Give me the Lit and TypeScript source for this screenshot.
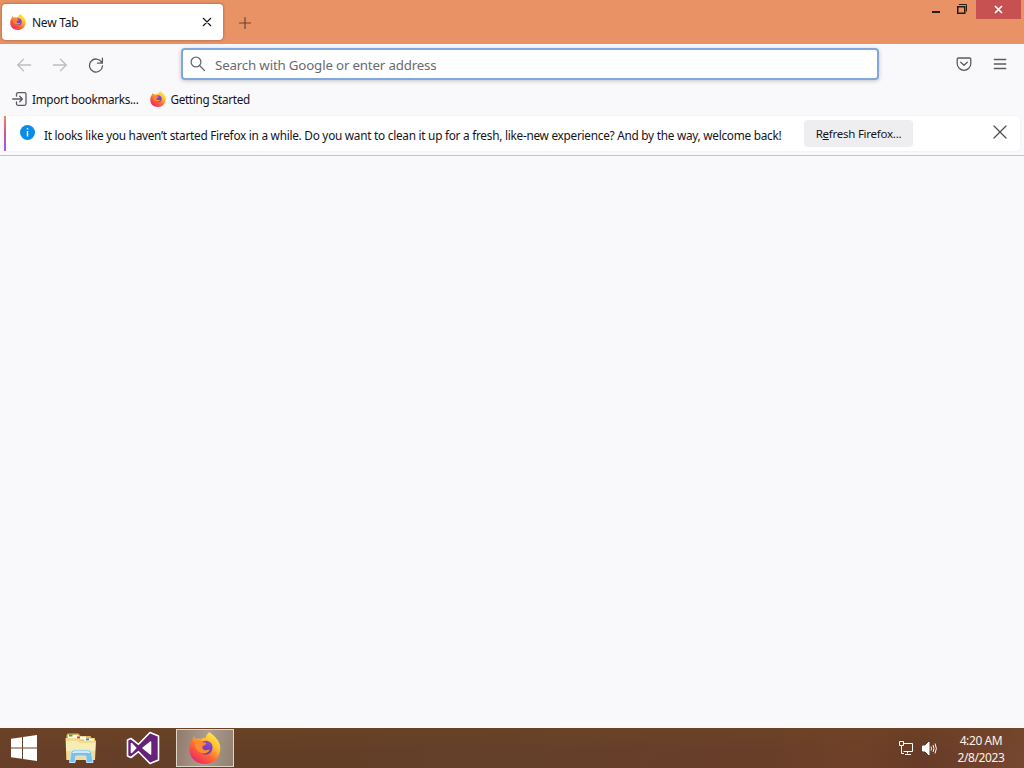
import { LitElement, html, css, svg } from 'lit'
import { customElement, property } from 'lit/decorators.js'

@customElement('firefox-logo')
export class FirefoxLogo extends LitElement {
  @property({ type: Number }) size = 16

  static styles = css`
    :host {
      display: flex;
      flex: none;
    }
  `

  render() {
    return html`
      <svg width=${this.size} height=${this.size} viewBox="0 0 32 32">
        <defs>
          <linearGradient id="flame" x1="0.85" y1="0.05" x2="0.2" y2="0.95">
            <stop offset="0" stop-color="#fff04a" />
            <stop offset="0.32" stop-color="#ffbe2e" />
            <stop offset="0.62" stop-color="#ff6a35" />
            <stop offset="1" stop-color="#ee2465" />
          </linearGradient>
          <linearGradient id="globe" x1="0.6" y1="0" x2="0.4" y2="1">
            <stop offset="0" stop-color="#9a45cf" />
            <stop offset="1" stop-color="#5540b8" />
          </linearGradient>
        </defs>
        <path
          fill="url(#flame)"
          d="M20.500 0c2 2.200 4.800 3.700 6.800 6.500 3 3.200 4.200 6.500 4 10.500C31 26 24.500 32 16 32 7.500 32 1 26.500.5 18.500.2 14 1.300 10 3.800 7.300L4.600 4l2.600 3c1.500-.6 3.200-.6 4.600.1 1.600-1.200 3.200-1.600 5-1.400C17 3.800 18.300 1.500 20.500 0z"
        />
        <path
          fill="url(#globe)"
          d="M12.500 10.500c1.500-1.500 4-2.300 6.300-1.500 3.600 1.200 5.200 4.200 4.700 7.500-.6 4-4 6.500-7.800 6-3.700-.5-6.200-3.700-5.700-7.200.3-2 1-3.500 2.500-4.800z"
        />
        <path
          fill="#ff8a2f"
          d="M5.500 9.500c3-2 6.500-1.300 8.500 1 1.800 0 3 .5 3.400 1.300-1 1.400-3 1.700-4 2.700-.4 1.800.6 3.200 2.600 3.700 2 .3 3.500-.9 5-.4-1.500 3-5 4.400-8 3.400C8.500 20 5.500 15 5.500 9.500z"
        />
      </svg>
    `
  }
}

// 16px toolbar glyphs, drawn with the current text colour
const icons = {
  back: svg`<path d="M14.700 8H1.500M7.500 2.300 1.800 8l5.700 5.700" />`,
  forward: svg`<path d="M1.300 8h13.200M8.500 2.300 14.200 8l-5.700 5.700" />`,
  reload: svg`<path d="M13.600 5.200A6.500 6.500 0 1 0 14.500 9M14.400 1.200v5H9.500" />`,
  search: svg`<circle cx="6" cy="6" r="4.900" /><path d="m9.700 9.700 4.800 4.800" />`,
  pocket: svg`<path d="M2.500 2h11c.8 0 1.300.5 1.300 1.300V7.500a6.800 6.800 0 0 1-13.600 0V3.300C1.200 2.500 1.700 2 2.500 2zM4.700 6.200 8 9.300l3.300-3.100" />`,
  menu: svg`<path d="M2.300 3.500h11.500M2.300 8h11.500M2.300 12.500h11.500" />`,
  import: svg`<path d="M4.500 5V3.200c0-.9.600-1.500 1.500-1.500h6.500c.9 0 1.500.6 1.500 1.500v9.600c0 .9-.6 1.500-1.500 1.500H6c-.9 0-1.500-.6-1.500-1.500V11M.7 8h9.500M7.700 5.300 10.400 8l-2.700 2.700" />`,
  close: svg`<path d="m2 2 12 12M14 2 2 14" />`,
  plus: svg`<path d="M8 2.500v11M2.500 8h11" />`,
}

@customElement('line-icon')
export class LineIcon extends LitElement {
  @property({ type: String }) name: keyof typeof icons = 'close'
  @property({ type: Number }) size = 16
  @property({ type: Number }) weight = 1.3

  static styles = css`
    :host {
      display: flex;
      flex: none;
    }
  `

  render() {
    return html`
      <svg
        width=${this.size}
        height=${this.size}
        viewBox="0 0 16 16"
        fill="none"
        stroke="currentColor"
        stroke-width=${this.weight}
        stroke-linecap="round"
        stroke-linejoin="round"
      >
        ${icons[this.name]}
      </svg>
    `
  }
}

@customElement('browser-window')
export class BrowserWindow extends LitElement {
  static styles = css`
    :host {
      display: flex;
      flex-direction: column;
      flex: 1;
      min-height: 0;
      background: #f9f9fb;
      color: #15141a;
      font-size: 12px;
    }
    .tabs {
      display: flex;
      height: 44px;
      background: #e89266;
    }
    .tab {
      display: flex;
      align-items: center;
      box-sizing: border-box;
      width: 221px;
      height: 36px;
      margin: 4px 0 0 2px;
      padding: 0 11px 0 8px;
      border-radius: 4px;
      background: #fff;
      box-shadow: 0 0 3px rgba(80, 40, 20, 0.5);
    }
    .tab-title {
      flex: 1;
      margin: 1px 0 0 6px;
      letter-spacing: -0.25px;
    }
    .new-tab {
      margin: 15px 0 0 14px;
      color: #6b4433;
    }
    .controls {
      display: flex;
      margin-left: auto;
      height: 19px;
    }
    .controls svg {
      display: block;
    }
    .close {
      width: 45px;
      margin: 0 3px 0 0;
      background: #c75050;
    }
    .nav {
      display: flex;
      align-items: center;
      height: 40px;
      box-sizing: border-box;
      padding: 0 16px;
      color: #5b5b62;
    }
    .history {
      display: flex;
      gap: 20px;
      flex: 1;
      padding-top: 1px;
    }
    .disabled {
      color: #bdbdc2;
    }
    .url {
      display: flex;
      align-items: center;
      box-sizing: border-box;
      width: 698px;
      height: 32px;
      padding-left: 7px;
      border: 2px solid #7fa8dc;
      border-radius: 4px;
      background: #fff;
      box-shadow: 0 1px 4px rgba(0, 0, 0, 0.22);
      font-size: 13.3px;
      color: #6a6a70;
    }
    .url span {
      margin: 2px 0 0 9px;
      letter-spacing: -0.17px;
    }
    .actions {
      display: flex;
      justify-content: flex-end;
      gap: 20px;
      width: 129px;
    }
    .bookmarks {
      display: flex;
      align-items: center;
      height: 29px;
      padding-left: 12px;
    }
    .bookmark {
      display: flex;
      align-items: center;
      gap: 4px;
      font-size: 11.7px;
      letter-spacing: -0.31px;
    }
    .bookmark line-icon {
      color: #5b5b62;
    }
    .bookmark + .bookmark {
      margin-left: 12px;
    }
    .notice {
      display: flex;
      align-items: center;
      height: 35px;
      margin: 3px 4px 4px;
      border-radius: 4px;
      background: #fff;
      box-shadow: 0 0 2px rgba(0, 0, 0, 0.08);
    }
    .stripe {
      width: 2px;
      height: 35px;
      background: linear-gradient(#f08a5c, #d0529a 50%, #a05cf0);
    }
    .info {
      margin: 0 9px 3px 14px;
    }
    .message {
      width: 760px;
      padding-top: 2px;
      font-size: 11.8px;
      letter-spacing: -0.26px;
      white-space: nowrap;
    }
    .refresh {
      width: 109px;
      height: 27px;
      border: 0;
      padding: 0;
      border-radius: 4px;
      background: #eeeef1;
      color: inherit;
      font: inherit;
      font-size: 11.5px;
      letter-spacing: -0.25px;
    }
    .dismiss {
      margin: 0 12px 3px auto;
      color: #4a4a50;
    }
    .page {
      flex: 1;
      border-top: 1px solid #c5c5c9;
    }
  `

  render() {
    return html`
      <div class="tabs">
        <div class="tab">
          <firefox-logo></firefox-logo>
          <span class="tab-title">New Tab</span>
          <line-icon name="close" size="10" weight="1.8"></line-icon>
        </div>
        <line-icon class="new-tab" name="plus" weight="1.2"></line-icon>
        <div class="controls">
          <svg width="48" height="19">
            <rect x="4" y="11" width="8" height="2" fill="#2b1a12" />
            <path d="M29.750 6.750h7v6.500h-7z" fill="none" stroke="#2b1a12" stroke-width="1.500" />
            <path d="M31 4.500h7.500v7" fill="none" stroke="#2b1a12" />
          </svg>
          <svg class="close" width="45" height="19">
            <path d="m19 6 7 7M26 6l-7 7" stroke="#fff" stroke-width="1.700" />
          </svg>
        </div>
      </div>
      <div class="nav">
        <div class="history">
          <line-icon class="disabled" name="back"></line-icon>
          <line-icon class="disabled" name="forward"></line-icon>
          <line-icon name="reload"></line-icon>
        </div>
        <div class="url">
          <line-icon name="search"></line-icon>
          <span>Search with Google or enter address</span>
        </div>
        <div class="actions">
          <line-icon name="pocket"></line-icon>
          <line-icon name="menu"></line-icon>
        </div>
      </div>
      <div class="bookmarks">
        <div class="bookmark"><line-icon name="import"></line-icon>Import bookmarks...</div>
        <div class="bookmark"><firefox-logo></firefox-logo>Getting Started</div>
      </div>
      <div class="notice">
        <div class="stripe"></div>
        <svg class="info" width="15" height="15" viewBox="0 0 15 15">
          <circle cx="7.500" cy="7.500" r="7.500" fill="#0c8ce9" />
          <path d="M7.500 3v1.500M7.500 6v5.500" stroke="#fff" stroke-width="1.400" />
        </svg>
        <span class="message"
          >It looks like you haven’t started Firefox in a while. Do you want to clean it up for a fresh, like-new
          experience? And by the way, welcome back!</span
        >
        <button class="refresh">R<u>e</u>fresh Firefox...</button>
        <line-icon class="dismiss" name="close" weight="1.2"></line-icon>
      </div>
      <div class="page"></div>
    `
  }
}

@customElement('task-bar')
export class TaskBar extends LitElement {
  static styles = css`
    :host {
      display: flex;
      align-items: center;
      height: 40px;
      background: linear-gradient(rgba(112, 72, 32, 0.4), rgba(104, 60, 40, 0) 60%),
        linear-gradient(90deg, #683f29, #633e26 25%, #643f2a 50%, #693e29 75%, #6e4028 84%, #673b27 90%, #764630);
      color: #fbf2ec;
      font-size: 12px;
    }
    svg {
      display: block;
      flex: none;
    }
    .start {
      margin-left: 11px;
    }
    .files {
      margin-left: 27px;
    }
    .studio {
      margin-left: 28px;
    }
    .active {
      display: flex;
      align-items: center;
      justify-content: center;
      box-sizing: border-box;
      width: 58px;
      height: 38px;
      margin-left: 16px;
      border: 1px solid #e0d4c4;
      background: linear-gradient(100deg, #90796a, #aa9d91 50%, #92806f);
    }
    .tray {
      display: flex;
      align-items: center;
      gap: 8px;
      margin-left: auto;
    }
    .clock {
      width: 50px;
      margin: 1px 18px 0 10px;
      text-align: center;
      line-height: 17px;
      letter-spacing: -0.4px;
      white-space: nowrap;
    }
  `

  render() {
    return html`
      <svg class="start" width="26" height="26" viewBox="0 0 26 26" fill="#fff">
        <path d="M0 3.700 11 2.200v10.300H0zM12 2 26 0v12.500H12zM0 13.500h11v10.300L0 22.300zM12 13.500h14V26l-14-2z" />
      </svg>
      <svg class="files" width="34" height="32" viewBox="0 0 34 32">
        <path d="M2.500 3.500q0-2 2-2h10l2 2.500h10l1 2h3.500v22h-28.500z" fill="#d8b862" />
        <path d="M4 3h10v3H4zM12 4.500h10v3H12zM20 6.500h10v3H20z" fill="#fff8df" />
        <path d="M5 2.500h3.500v2H5z" fill="#39a35b" />
        <path d="M13 4.500h3v2h-3z" fill="#d24b35" />
        <path d="M22 6.500h3v2h-3z" fill="#3e89c9" />
        <path d="M1.500 6h11.500l2.500 2.500h16.500l-1 19.500H2.500z" fill="#f3dc90" />
        <path d="M2 9h11l2.500 2h16l-.5 8H2z" fill="#f9ebb4" />
        <path d="M5.500 30.500 7 20.500q.3-2.500 3-2.500h14.500q2.500 0 3 2.500l1.500 10h-6.500l-.7-6.500h-10l-.8 6.500z" fill="#7cc0ea" stroke="#c5e7f7" />
        <path d="M9 21q.2-1 1.500-1h13.500q1.300 0 1.500 1" fill="none" stroke="#e4f6ff" stroke-width="1.500" />
      </svg>
      <svg class="studio" width="34" height="34" viewBox="0 0 34 34">
        <path
          fill="#68217a"
          fill-rule="evenodd"
          stroke="#fff"
          stroke-width="1.600"
          stroke-linejoin="round"
          d="M24 1.500 32.500 5v24L24 32.500 12.500 20.700 5 26.500 1.500 25V9L5 7.500l7.500 5.800zM5.500 12.500v9l4.200-4.500zM24.500 11 17 17l7.500 6z"
        />
        <path fill="#fff" d="M5.500 12.500v9l4.200-4.500zM24.500 11 17 17l7.500 6z" />
      </svg>
      <div class="active"><firefox-logo size="32"></firefox-logo></div>
      <div class="tray">
        <svg width="16" height="16" viewBox="0 0 16 16" fill="none" stroke="#fff">
          <path d="M6 3.500h8.500v8H5.500M9.500 11.500v2M7 14.500h6M1.500 1.500h4v4h-4zM3.500 5.500v8H6" />
        </svg>
        <svg width="16" height="16" viewBox="0 0 16 16" fill="none" stroke="#fff">
          <path d="M.5 6H3l4-4v13l-4-4H.5z" fill="#fff" />
          <path d="M9 6.500q1 2 0 4M11 5q2 3.500 0 7M13 3.500q2.800 5 0 10" />
        </svg>
        <div class="clock">
          <div>4:20 AM</div>
          <div>2/8/2023</div>
        </div>
      </div>
    `
  }
}

@customElement('app-root')
export class AppRoot extends LitElement {
  static styles = css`
    :host {
      display: flex;
      flex-direction: column;
      width: 1024px;
      height: 768px;
      overflow: hidden;
      font-family: 'Segoe UI', 'Noto Sans', 'Open Sans', sans-serif;
    }
  `

  render() {
    return html`
      <browser-window></browser-window>
      <task-bar></task-bar>
    `
  }
}
